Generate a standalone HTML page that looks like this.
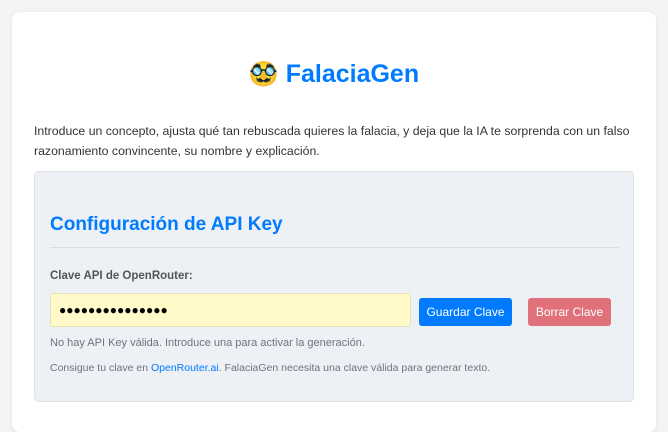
<!DOCTYPE html>
<html><head><meta charset="utf-8"><style>
body{margin:0;background:#f3f4f6;font-family:"Liberation Sans",sans-serif;width:668px;height:412px;overflow:hidden}
.card{position:absolute;left:12px;top:12px;width:644px;height:420px;background:#fff;border-radius:8px;box-shadow:0 1px 4px rgba(0,0,0,.08)}
h1{position:absolute;left:0;width:100%;top:47px;margin:0;text-align:center;font-size:25px;color:#007bff;font-weight:bold;line-height:30px}
.intro{position:absolute;left:34px;top:121px;width:600px;font-size:12.3px;line-height:20px;color:#333}
.panel{position:absolute;left:34px;top:171px;width:598px;height:229px;background:#edf0f4;border:1px solid #dde1e6;border-radius:5px}
h2{position:absolute;left:15px;top:42px;margin:0;font-size:19px;color:#007bff;font-weight:bold}
.hr{position:absolute;left:15px;top:75px;width:569px;height:1px;background:#d8dce1}
.lbl{position:absolute;left:15px;top:98px;font-size:11.5px;font-weight:bold;color:#555}
.inp{position:absolute;left:15px;top:121px;width:351px;height:32px;background:#fffac8;border:1px solid #e6e2b8;border-radius:3px;font-size:12px;line-height:32px;padding-left:8px;color:#000}
.b{position:absolute;top:126px;height:28px;border-radius:3px;color:#fff;font-size:12px;line-height:28px;text-align:center}
.s{position:absolute;left:15px;font-size:11px;color:#6c757d}
</style></head><body>
<div class="card">
<h1><span style="font-size:24px">🥸</span> FalaciaGen</h1>
</div>
<div class="intro">Introduce un concepto, ajusta qué tan rebuscada quieres la falacia, y deja que la IA te sorprenda con un falso razonamiento convincente, su nombre y explicación.</div>
<div class="panel">
<h2>Configuración de API Key</h2>
<div class="hr"></div>
<div class="lbl">Clave API de OpenRouter:</div>
<div class="inp">●●●●●●●●●●●●●●●</div>
<div class="b" style="left:384px;width:93px;background:#007bff">Guardar Clave</div>
<div class="b" style="left:493px;width:83px;background:#e07079">Borrar Clave</div>
<div class="s" style="top:165px">No hay API Key válida. Introduce una para activar la generación.</div>
<div class="s" style="top:190px;font-size:10.5px">Consigue tu clave en <span style="color:#007bff">OpenRouter.ai</span>. FalaciaGen necesita una clave válida para generar texto.</div>
</div>
</body></html>
